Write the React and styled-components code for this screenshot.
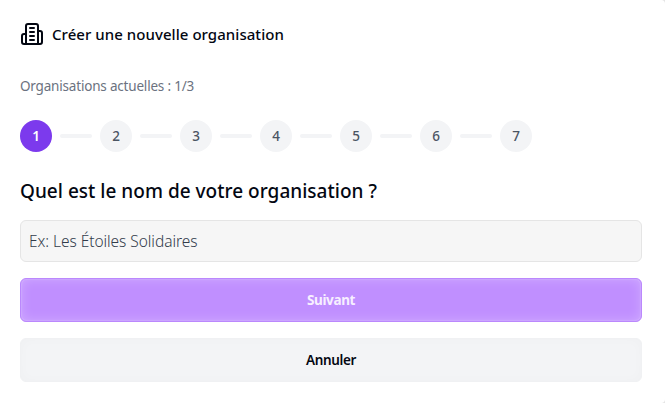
import React from "react";
import styled, { createGlobalStyle } from "styled-components";

const GlobalStyle = createGlobalStyle`
  *, *::before, *::after { box-sizing: border-box; }
  body {
    margin: 0;
    background: #e4e4e4;
    font-family: "Segoe UI", "Noto Sans", "Open Sans", sans-serif;
    color: #030712;
  }
`;

const Card = styled.main`
  display: flex;
  flex-direction: column;
  height: 403px;
  padding: 22px 23px 0 20px;
  background: #fff;
  border-radius: 0 4px 4px 0;
`;

const Header = styled.header`
  display: flex;
  align-items: center;
  gap: 8px;
  height: 24px;
`;

const Title = styled.h1`
  margin: 0;
  font-size: 15px;
  font-weight: 550;
  line-height: 24px;
  letter-spacing: 0.05px;
  white-space: nowrap;
`;

const Count = styled.p`
  margin: 30px 0 0;
  font-size: 13.5px;
  line-height: 20px;
  letter-spacing: -0.19px;
  color: #6b7280;
`;

const Steps = styled.div`
  display: flex;
  align-items: center;
  gap: 8px;
  margin-top: 24px;
`;

const Step = styled.span`
  display: grid;
  place-items: center;
  width: 32px;
  height: 32px;
  border-radius: 50%;
  font-size: 13.5px;
  font-weight: ${(p) => (p.$active ? 600 : 500)};
  color: ${(p) => (p.$active ? "#fff" : "#4b5563")};
  background: ${(p) => (p.$active ? "#7c3aed" : "#f3f4f6")};
`;

const Connector = styled.span`
  width: 32px;
  height: 4px;
  border-radius: 2px;
  background: #f3f4f6;
`;

const Question = styled.h2`
  margin: 25px 0 0;
  font-size: 19px;
  font-weight: 550;
  line-height: 28px;
  letter-spacing: 0.02px;
`;

const NameInput = styled.input`
  width: 100%;
  height: 42px;
  margin: 15px 0 0;
  padding: 0 8px;
  border: 1px solid #e5e5e5;
  border-radius: 6px;
  background: #f6f6f6;
  font-family: inherit;
  font-size: 15.5px;
  font-weight: 300;
  letter-spacing: -0.05px;
  outline: none;
  &::placeholder { color: #323c4b; opacity: 1; }
`;

const Button = styled.button`
  width: 100%;
  height: 44px;
  margin: 16px 0 0;
  padding: 0;
  border: 1px solid ${(p) => (p.$primary ? "#bb88fd" : "#f0f1f3")};
  border-radius: 6px;
  background: ${(p) => (p.$primary ? "#c08fff" : "#f3f4f6")};
  box-shadow: ${(p) =>
    p.$primary
      ? "inset 0 0 12px rgba(255,255,255,.26), inset 0 0 2px rgba(255,255,255,.35)"
      : "inset 0 0 12px rgba(0,0,0,.02)"};
  font-family: inherit;
  font-size: 13.5px;
  font-weight: ${(p) => (p.$primary ? 700 : 600)};
  letter-spacing: -0.35px;
  color: ${(p) => (p.$primary ? "#f7efff" : "#030712")};
`;

const BuildingIcon = () => (
  <svg width="24" height="24" viewBox="0 0 24 24" fill="none" stroke="currentColor" strokeWidth="2" strokeLinecap="round" strokeLinejoin="round" aria-hidden="true">
    <path d="M6 22V4a2 2 0 0 1 2-2h8a2 2 0 0 1 2 2v18Z" />
    <path d="M6 12H4a2 2 0 0 0-2 2v6a2 2 0 0 0 2 2h2" />
    <path d="M18 9h2a2 2 0 0 1 2 2v9a2 2 0 0 1-2 2h-2" />
    <path d="M10 6h4M10 10h4M10 14h4M10 18h4" />
  </svg>
);

export default function App() {
  return (
    <>
      <GlobalStyle />
      <Card>
        <Header>
          <BuildingIcon />
          <Title>Créer une nouvelle organisation</Title>
        </Header>
        <Count>Organisations actuelles : 1/3</Count>
        <Steps>
          {[1, 2, 3, 4, 5, 6, 7].map((n) => (
            <React.Fragment key={n}>
              {n > 1 && <Connector />}
              <Step $active={n === 1}>{n}</Step>
            </React.Fragment>
          ))}
        </Steps>
        <Question>Quel est le nom de votre organisation ?</Question>
        <NameInput placeholder="Ex: Les Étoiles Solidaires" />
        <Button $primary>Suivant</Button>
        <Button>Annuler</Button>
      </Card>
    </>
  );
}
